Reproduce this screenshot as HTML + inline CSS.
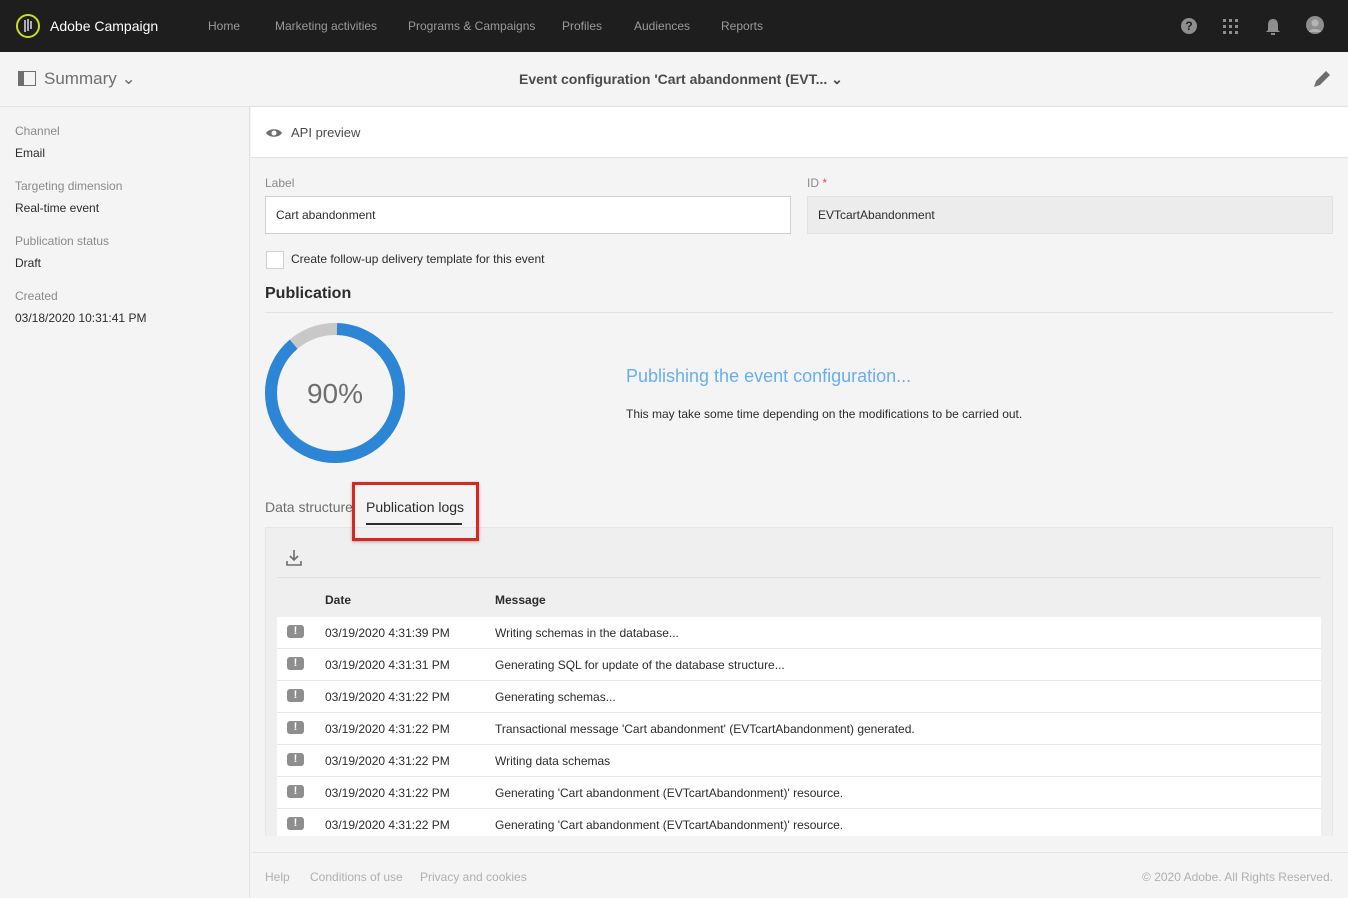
<!DOCTYPE html>
<html><head><style>
*{box-sizing:border-box;margin:0;padding:0}
body{width:1348px;height:898px;overflow:hidden;font-family:"Liberation Sans",sans-serif;background:#f4f4f4;color:#2c2c2c;position:relative;font-size:12px}
.abs{position:absolute}
.top{left:0;top:0;width:1348px;height:52px;background:#1e1e1e}
.nav{top:19px;color:#9a9a9a;font-size:12px}
.sub{left:0;top:52px;width:1348px;height:55px;background:#f4f4f4;border-bottom:1px solid #e2e2e2}
.side{left:0;top:107px;width:250px;height:791px;border-right:1px solid #e2e2e2}
.lbl{color:#8a8a8a;font-size:12px}
.val{color:#2c2c2c;font-size:12px}
.row{left:277px;width:1044px;height:32px;background:#fff;border-bottom:1px solid #e6e6e6}
.row span{position:absolute;top:9px;font-size:12px}
.ico{position:absolute;left:10px;top:8px;width:17px;height:13px;background:#8e8e8e;border-radius:3px;color:#fff;font-weight:bold;font-size:11px;text-align:center;line-height:13px}
</style></head><body>
<div class="abs top"></div>
<svg class="abs" style="left:15px;top:13px" width="26" height="26"><circle cx="13" cy="13" r="11" fill="none" stroke="#c8df1e" stroke-width="2"/><path d="M10 7v12M13 6v12M16 8v8" stroke="#ddd" stroke-width="1.5"/></svg>
<div class="abs" style="left:50px;top:18px;color:#fff;font-size:14px">Adobe Campaign</div>
<div class="abs nav" style="left:208px">Home</div>
<div class="abs nav" style="left:275px">Marketing activities</div>
<div class="abs nav" style="left:408px">Programs &amp; Campaigns</div>
<div class="abs nav" style="left:562px">Profiles</div>
<div class="abs nav" style="left:634px">Audiences</div>
<div class="abs nav" style="left:721px">Reports</div>
<div class="abs" style="left:1181px;top:18px;width:16px;height:16px;border-radius:50%;background:#8e8e8e;color:#1e1e1e;font-weight:bold;font-size:12px;text-align:center;line-height:16px">?</div>
<svg class="abs" style="left:1223px;top:19px" width="16" height="16" fill="#8e8e8e"><rect x="0" y="0" width="3" height="3"/><rect x="6" y="0" width="3" height="3"/><rect x="12" y="0" width="3" height="3"/><rect x="0" y="6" width="3" height="3"/><rect x="6" y="6" width="3" height="3"/><rect x="12" y="6" width="3" height="3"/><rect x="0" y="12" width="3" height="3"/><rect x="6" y="12" width="3" height="3"/><rect x="12" y="12" width="3" height="3"/></svg>
<svg class="abs" style="left:1265px;top:18px" width="16" height="18" fill="#8e8e8e"><path d="M8 1c3 0 5 2 5 6v5l2 2H1l2-2V7c0-4 2-6 5-6z"/><rect x="6" y="15" width="4" height="2"/></svg>
<svg class="abs" style="left:1306px;top:16px" width="18" height="18"><circle cx="9" cy="9" r="9" fill="#8e8e8e"/><circle cx="9" cy="7" r="3.5" fill="#b5b5b5"/><path d="M3 16c1-4 11-4 12 0" fill="#b5b5b5"/></svg>

<div class="abs sub"></div>
<svg class="abs" style="left:18px;top:71px" width="18" height="15"><rect x="0.5" y="0.5" width="17" height="14" fill="none" stroke="#6e6e6e"/><rect x="1" y="1" width="5" height="13" fill="#6e6e6e"/></svg>
<div class="abs" style="left:44px;top:69px;font-size:17px;color:#6e6e6e">Summary &#8964;</div>
<div class="abs" style="left:519px;top:71px;font-size:14px;font-weight:bold;color:#4b4b4b">Event configuration 'Cart abandonment (EVT... &#8964;</div>
<svg class="abs" style="left:1312px;top:69px" width="20" height="20"><path d="M2 18l2-6 10-10 4 4-10 10z" fill="#6e6e6e"/></svg>

<div class="abs side"></div>
<div class="abs lbl" style="left:15px;top:124px">Channel</div>
<div class="abs val" style="left:15px;top:146px">Email</div>
<div class="abs lbl" style="left:15px;top:179px">Targeting dimension</div>
<div class="abs val" style="left:15px;top:201px">Real-time event</div>
<div class="abs lbl" style="left:15px;top:234px">Publication status</div>
<div class="abs val" style="left:15px;top:256px">Draft</div>
<div class="abs lbl" style="left:15px;top:289px">Created</div>
<div class="abs val" style="left:15px;top:311px">03/18/2020 10:31:41 PM</div>

<div class="abs" style="left:251px;top:107px;width:1097px;height:51px;background:#fff;border-bottom:1px solid #e2e2e2"></div>
<svg class="abs" style="left:265px;top:127px" width="18" height="12"><path d="M1 6C4 1 14 1 17 6C14 11 4 11 1 6z" fill="#6e6e6e"/><circle cx="9" cy="6" r="2.5" fill="#fff"/></svg>
<div class="abs" style="left:291px;top:125px;font-size:13px;color:#4b4b4b">API preview</div>

<div class="abs lbl" style="left:265px;top:176px">Label</div>
<div class="abs" style="left:265px;top:196px;width:526px;height:38px;background:#fff;border:1px solid #d0d0d0;padding:11px 10px">Cart abandonment</div>
<div class="abs lbl" style="left:807px;top:176px">ID <span style="color:#e34850">*</span></div>
<div class="abs" style="left:807px;top:196px;width:526px;height:38px;background:#ececec;border:1px solid #e2e2e2;padding:11px 10px">EVTcartAbandonment</div>
<div class="abs" style="left:266px;top:251px;width:18px;height:18px;background:#fff;border:1px solid #d0d0d0"></div>
<div class="abs" style="left:291px;top:252px">Create follow-up delivery template for this event</div>
<div class="abs" style="left:265px;top:285px;font-size:16px;font-weight:bold">Publication</div>
<div class="abs" style="left:265px;top:312px;width:1068px;height:1px;background:#e2e2e2"></div>

<svg class="abs" style="left:265px;top:323px" width="140" height="140">
<circle cx="70" cy="70" r="64" fill="none" stroke="#c8c8c8" stroke-width="12"/>
<circle cx="70" cy="70" r="64" fill="none" stroke="#2d86d5" stroke-width="12" stroke-dasharray="355 500" transform="rotate(-90 70 70)" stroke-dashoffset="-2"/>
<text x="70" y="80" text-anchor="middle" font-family="Liberation Sans" font-size="28" fill="#6e6e6e">90%</text>
</svg>
<div class="abs" style="left:626px;top:366px;font-size:18px;color:#6aaef0">Publishing the event configuration...</div>
<div class="abs" style="left:626px;top:407px">This may take some time depending on the modifications to be carried out.</div>

<div class="abs" style="left:265px;top:499px;font-size:14px;color:#6e6e6e">Data structure</div>
<div class="abs" style="left:366px;top:499px;font-size:14px">Publication logs</div>
<div class="abs" style="left:366px;top:523px;width:96px;height:2px;background:#2c2c2c"></div>

<div class="abs" style="left:265px;top:527px;width:1068px;height:309px;background:#efefef;border:1px solid #e6e6e6;border-bottom:none"></div>
<div class="abs" style="left:352px;top:482px;width:127px;height:59px;border:3px solid #d7271f;box-shadow:0 1px 3px rgba(0,0,0,.3);z-index:5"></div>
<svg class="abs" style="left:285px;top:549px" width="18" height="18"><path d="M9 1v10M5 7l4 4 4-4M2 12v4h14v-4" fill="none" stroke="#6e6e6e" stroke-width="1.6"/></svg>
<div class="abs" style="left:277px;top:577px;width:1044px;height:1px;background:#e2e2e2"></div>
<div class="abs" style="left:325px;top:593px;font-weight:bold">Date</div>
<div class="abs" style="left:495px;top:593px;font-weight:bold">Message</div>

<div class="abs row" style="top:617px"><div class="ico">!</div><span style="left:48px">03/19/2020 4:31:39 PM</span><span style="left:218px">Writing schemas in the database...</span></div>
<div class="abs row" style="top:649px"><div class="ico">!</div><span style="left:48px">03/19/2020 4:31:31 PM</span><span style="left:218px">Generating SQL for update of the database structure...</span></div>
<div class="abs row" style="top:681px"><div class="ico">!</div><span style="left:48px">03/19/2020 4:31:22 PM</span><span style="left:218px">Generating schemas...</span></div>
<div class="abs row" style="top:713px"><div class="ico">!</div><span style="left:48px">03/19/2020 4:31:22 PM</span><span style="left:218px">Transactional message 'Cart abandonment' (EVTcartAbandonment) generated.</span></div>
<div class="abs row" style="top:745px"><div class="ico">!</div><span style="left:48px">03/19/2020 4:31:22 PM</span><span style="left:218px">Writing data schemas</span></div>
<div class="abs row" style="top:777px"><div class="ico">!</div><span style="left:48px">03/19/2020 4:31:22 PM</span><span style="left:218px">Generating 'Cart abandonment (EVTcartAbandonment)' resource.</span></div>
<div class="abs row" style="top:809px;height:27px;border-bottom:none"><div class="ico">!</div><span style="left:48px">03/19/2020 4:31:22 PM</span><span style="left:218px">Generating 'Cart abandonment (EVTcartAbandonment)' resource.</span></div>

<div class="abs" style="left:251px;top:852px;width:1097px;height:1px;background:#e6e6e6"></div>
<div class="abs lbl" style="left:265px;top:870px;color:#b0b0b0">Help</div>
<div class="abs lbl" style="left:310px;top:870px;color:#b0b0b0">Conditions of use</div>
<div class="abs lbl" style="left:420px;top:870px;color:#b0b0b0">Privacy and cookies</div>
<div class="abs lbl" style="right:15px;top:870px;color:#b0b0b0">© 2020 Adobe. All Rights Reserved.</div>
</body></html>
